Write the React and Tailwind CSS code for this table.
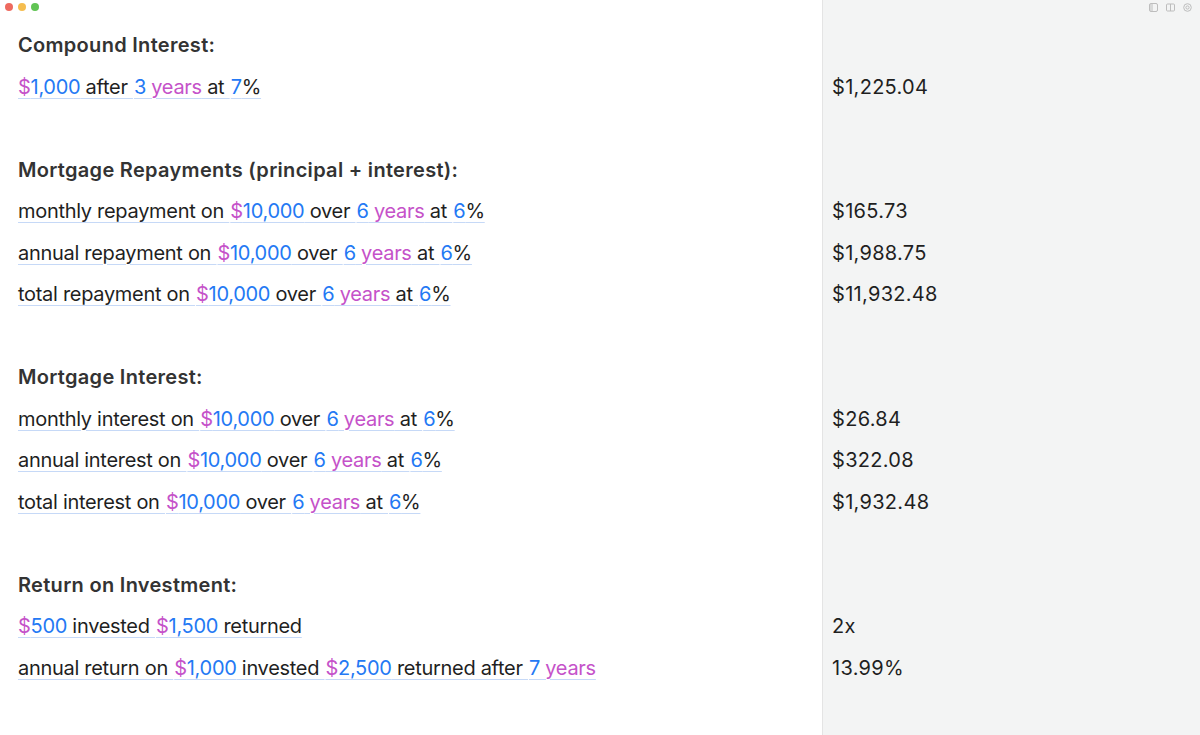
import React from "react";

const M = "text-[#c552c9]";
const B = "text-[#2479f4]";

// token kinds: t = plain text, d = "$" + number, n = number, y = "years", p = "%"
const lines = [
  { head: "Compound Interest:" },
  {
    segs: [
      [["d", "1,000"], ["t", " after "]],
      [["n", "3"], ["y", " years"], ["t", " at "]],
      [["n", "7"], ["p"]],
    ],
    result: "$1,225.04",
  },
  {},
  { head: "Mortgage Repayments (principal + interest):" },
  ...["monthly repayment", "annual repayment", "total repayment"].map((label, i) => ({
    segs: loanSegs(label),
    result: ["$165.73", "$1,988.75", "$11,932.48"][i],
  })),
  {},
  { head: "Mortgage Interest:" },
  ...["monthly interest", "annual interest", "total interest"].map((label, i) => ({
    segs: loanSegs(label),
    result: ["$26.84", "$322.08", "$1,932.48"][i],
  })),
  {},
  { head: "Return on Investment:" },
  {
    segs: [
      [["d", "500"], ["t", " invested "]],
      [["d", "1,500"], ["t", " returned"]],
    ],
    result: "2x",
  },
  {
    segs: [
      [["t", "annual return on "]],
      [["d", "1,000"], ["t", " invested "]],
      [["d", "2,500"], ["t", " returned after "]],
      [["n", "7"], ["y", " years"]],
    ],
    result: "13.99%",
  },
];

function loanSegs(label) {
  return [
    [["t", label + " on "]],
    [["d", "10,000"], ["t", " over "]],
    [["n", "6"], ["y", " years"], ["t", " at "]],
    [["n", "6"], ["p"]],
  ];
}

function Token({ tok }) {
  const [kind, val] = tok;
  if (kind === "d")
    return (
      <>
        <span className={M}>$</span>
        <span className={B}>{val}</span>
      </>
    );
  if (kind === "n") return <span className={B}>{val}</span>;
  if (kind === "y") return <span className={M}>{val}</span>;
  if (kind === "p") return <span>%</span>;
  return <span>{val}</span>;
}

function Expression({ segs }) {
  return (
    <span className="whitespace-pre tracking-[-0.3px]">
      {segs.map((seg, i) => (
        <span
          key={i}
          className="mr-[1px] underline decoration-[#c6d9f7] decoration-1 underline-offset-[4px]"
        >
          {seg.map((tok, j) => (
            <Token key={j} tok={tok} />
          ))}
        </span>
      ))}
    </span>
  );
}

function TrafficLights() {
  return (
    <div className="absolute left-[5px] top-[3px] flex gap-[5px]">
      <span className="w-[8px] h-[8px] rounded-full bg-[#ee6a5f]" />
      <span className="w-[8px] h-[8px] rounded-full bg-[#f5bd4f]" />
      <span className="w-[8px] h-[8px] rounded-full bg-[#61c454]" />
    </div>
  );
}

function ToolIcons() {
  return (
    <div className="absolute right-[8px] top-[3px] flex gap-[8px] text-[#bdbdbd]">
      <svg width="9" height="9" viewBox="0 0 9 9" fill="none" stroke="currentColor">
        <rect x="0.5" y="0.5" width="8" height="8" rx="1.5" />
        <rect x="1" y="1" width="3" height="7" fill="currentColor" stroke="none" opacity="0.5" />
      </svg>
      <svg width="9" height="9" viewBox="0 0 9 9" fill="none" stroke="currentColor">
        <rect x="0.5" y="1" width="8" height="7" rx="1" />
        <line x1="4.5" y1="1" x2="4.5" y2="8" />
      </svg>
      <svg width="9" height="9" viewBox="0 0 9 9" fill="none" stroke="currentColor">
        <circle cx="4.5" cy="4.5" r="3.8" />
        <circle cx="4.5" cy="4.5" r="1.6" />
      </svg>
    </div>
  );
}

export default function App() {
  return (
    <div
      className="relative flex w-[1200px] h-[735px] bg-white text-[20px] leading-[41.5px] text-[#1f1f1f] overflow-hidden"
      style={{ fontFamily: "Inter, 'Noto Sans', 'Liberation Sans', sans-serif" }}
    >
      <TrafficLights />
      <div className="w-[822px] pt-[25px] pl-[18px]">
        {lines.map((line, i) => (
          <div key={i} className="h-[41.5px]">
            {line.head && (
              <span className="font-semibold text-[#333] tracking-[0.3px]">{line.head}</span>
            )}
            {line.segs && <Expression segs={line.segs} />}
          </div>
        ))}
      </div>
      <div className="flex-1 bg-[#f3f4f4] border-l border-[#e4e4e4] pt-[25px] pl-[9px] tracking-[0.3px]">
        {lines.map((line, i) => (
          <div key={i} className="h-[41.5px]">
            {line.result}
          </div>
        ))}
      </div>
      <ToolIcons />
    </div>
  );
}
